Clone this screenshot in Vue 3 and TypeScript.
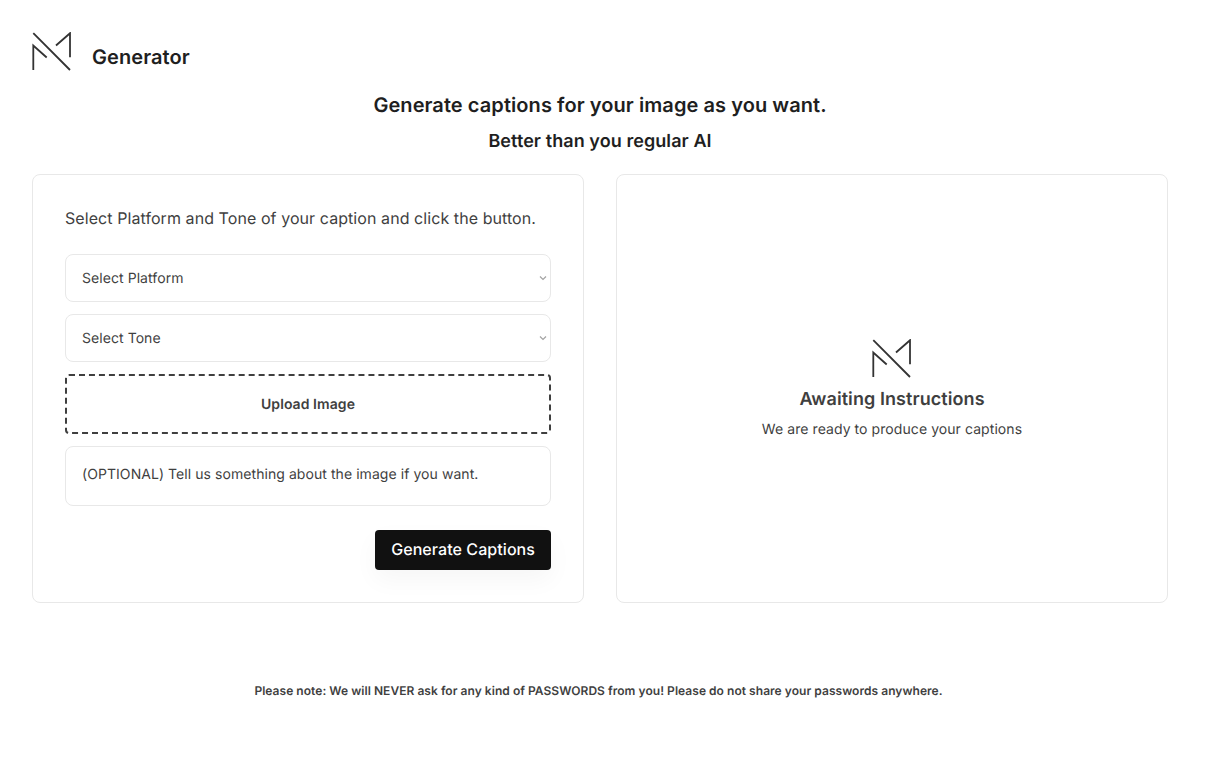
<template>
  <div class="page">
    <header class="brand">
      <svg class="logo" width="40" height="40" viewBox="0 0 40 40" fill="none">
        <path d="M1.3 1.2 38 38M1.3 38V13.5L14.7 25.5M38 25.2V1.2L24 13.5" />
      </svg>
      <span class="brand-name">Generator</span>
    </header>

    <h1 class="title">Generate captions for your image as you want.</h1>
    <h2 class="subtitle">Better than you regular AI</h2>

    <main class="cards">
      <section class="card form">
        <p class="lead">Select Platform and Tone of your caption and click the button.</p>
        <label v-for="name in selects" :key="name" class="select-wrap">
          <select class="field">
            <option>{{ name }}</option>
          </select>
          <svg class="chevron" width="8" height="6" viewBox="0 0 8 6" fill="none">
            <path d="M1 1.5 4 4.5 7 1.5" />
          </svg>
        </label>
        <button class="upload" type="button">Upload Image</button>
        <textarea class="notes" placeholder="(OPTIONAL) Tell us something about the image if you want."></textarea>
        <div class="actions">
          <button class="generate" type="button">Generate Captions</button>
        </div>
      </section>

      <section class="card waiting">
        <svg class="logo" width="40" height="40" viewBox="0 0 40 40" fill="none">
          <path d="M1.3 1.2 38 38M1.3 38V13.5L14.7 25.5M38 25.2V1.2L24 13.5" />
        </svg>
        <h3 class="waiting-title">Awaiting Instructions</h3>
        <p class="waiting-text">We are ready to produce your captions</p>
      </section>
    </main>

    <footer class="note">Please note: We will NEVER ask for any kind of PASSWORDS from you! Please do not share your passwords anywhere.</footer>
  </div>
</template>

<script setup lang="ts">
const selects: string[] = ['Select Platform', 'Select Tone']
</script>

<style>
body {
  background: #ffffff;
}
</style>

<style scoped>
.page {
  box-sizing: border-box;
  width: 1200px;
  padding: 32px 32px 0;
  font-family: Inter, "Liberation Sans", sans-serif;
  letter-spacing: 0.0045em;
  color: #1f1f1f;
  text-rendering: geometricPrecision;
}

.brand {
  display: flex;
  align-items: center;
  gap: 20px;
  height: 40px;
}

.logo path {
  stroke: #333333;
  stroke-width: 1.8;
}

.brand-name {
  margin-top: 10px;
  font-size: 20px;
  font-weight: 600;
}

.title {
  margin: 19px 0 0;
  font-size: 20px;
  line-height: 28px;
  font-weight: 600;
  text-align: center;
}

.subtitle {
  margin: 9px 0 0;
  font-size: 18px;
  line-height: 28px;
  font-weight: 600;
  text-align: center;
}

.cards {
  display: grid;
  grid-template-columns: 1fr 1fr;
  gap: 32px;
  margin-top: 18px;
}

.card {
  box-sizing: border-box;
  height: 429px;
  border: 1px solid #e8e8e8;
  border-radius: 8px;
  background: #fff;
}

.form {
  display: flex;
  flex-direction: column;
  padding: 32px;
}

.lead {
  margin: 0 0 25px;
  font-size: 16px;
  line-height: 22px;
  color: #3f3f3f;
}

.select-wrap {
  position: relative;
  display: block;
  margin-bottom: 12px;
}

.field {
  box-sizing: border-box;
  display: block;
  width: 100%;
  height: 48px;
  padding: 0 16px;
  border: 1px solid #e8e8e8;
  border-radius: 8px;
  background: #fff;
  font: inherit;
  font-size: 14px;
  letter-spacing: 0.0045em;
  color: #3f3f3f;
  text-rendering: geometricPrecision;
  appearance: none;
}

.chevron {
  position: absolute;
  right: 4px;
  top: 21px;
  pointer-events: none;
}

.chevron path {
  stroke: #a3a3a3;
  stroke-width: 1.2;
}

.upload {
  box-sizing: border-box;
  width: 100%;
  height: 60px;
  margin-bottom: 12px;
  border: 2px dashed #3f3f3f;
  border-radius: 4px;
  background: #fff;
  font: inherit;
  font-size: 14px;
  font-weight: 600;
  letter-spacing: 0.0045em;
  color: #3f3f3f;
  text-rendering: geometricPrecision;
}

.notes {
  box-sizing: border-box;
  display: block;
  width: 100%;
  height: 60px;
  padding: 18px 16px;
  border: 1px solid #e8e8e8;
  border-radius: 8px;
  font: inherit;
  font-size: 14px;
  line-height: 20px;
  letter-spacing: 0.0045em;
  text-rendering: geometricPrecision;
  resize: none;
  outline: none;
}

.notes::placeholder {
  color: #3f3f3f;
  opacity: 1;
}

.actions {
  display: flex;
  justify-content: flex-end;
  margin-top: 24px;
}

.generate {
  height: 40px;
  padding: 0 16px 2px;
  border: none;
  border-radius: 4px;
  background: #111111;
  color: #fff;
  font: inherit;
  font-size: 16px;
  font-weight: 500;
  letter-spacing: 0.0045em;
  text-rendering: geometricPrecision;
  box-shadow: 0 10px 24px rgba(0, 0, 0, 0.04);
}

.waiting {
  display: flex;
  flex-direction: column;
  align-items: center;
  justify-content: center;
  padding-top: 1px;
}

.waiting-title {
  margin: 7px 0 0;
  font-size: 18px;
  line-height: 28px;
  font-weight: 600;
  color: #3f3f3f;
}

.waiting-text {
  margin: 6px 0 0;
  font-size: 14px;
  line-height: 20px;
  color: #3f3f3f;
}

.note {
  margin-top: 80px;
  padding-right: 3px;
  font-size: 12px;
  line-height: 16px;
  font-weight: 600;
  letter-spacing: 0.0035em;
  color: #3f3f3f;
  text-align: center;
}
</style>
